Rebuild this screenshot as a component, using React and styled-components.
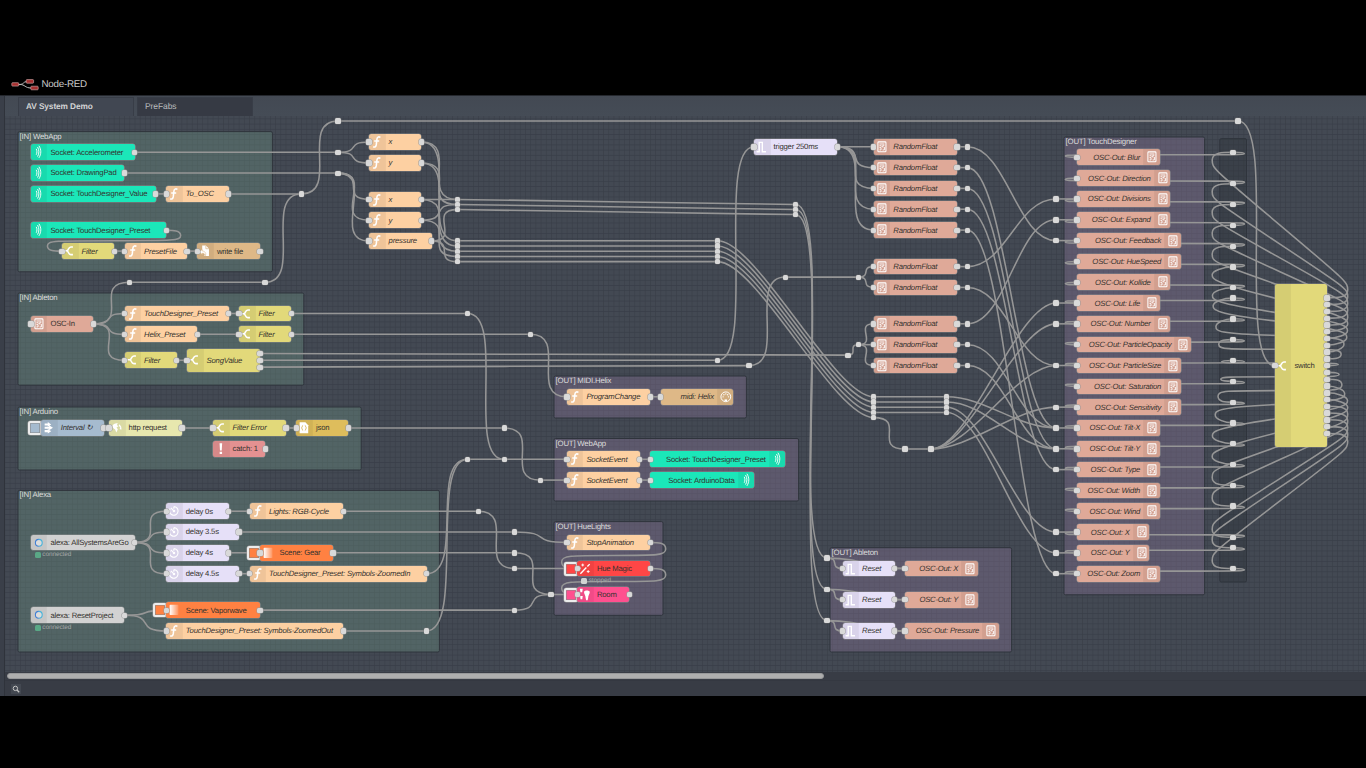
import React from 'react';
import styled, { createGlobalStyle, css } from 'styled-components';

const GlobalStyle = createGlobalStyle`
  * { box-sizing: border-box; }
  html, body { margin: 0; padding: 0; background: #000; }
  body { font-family: 'Liberation Sans', Arial, sans-serif; overflow: hidden; text-rendering: geometricPrecision; }
`;

/* Canvas geometry: one editor unit is 0.5206px at this zoom level. */
const UNIT = 0.5206;
const NODE_W = 100 * UNIT;
const NODE_H = 30 * UNIT;
const OX = 5;
const OY = 116;

const Page = styled.div`
  display: flex;
  flex-direction: column;
  width: 1366px;
  height: 768px;
  background: #000;
`;

const Header = styled.header`
  display: flex;
  align-items: center;
  gap: 2.5px;
  height: 95px;
  padding: 73px 0 0 11px;
  font-size: 9.8px;
  letter-spacing: -0.25px;
  color: #c9c9c9;
  flex: none;
`;

const Editor = styled.main`
  display: flex;
  height: 601px;
  border-top: 1px solid #24272d;
  background: #343841;
  flex: none;
`;

const Gutter = styled.div`
  width: 5px;
  border-right: 1px solid #2f333b;
  background: #3a3f49;
`;

const Workspace = styled.section`
  flex: 1;
  display: flex;
  flex-direction: column;
  min-width: 0;
`;

const TabBar = styled.nav`
  display: flex;
  gap: 3px;
  height: 20px;
  padding: 1px 0 0 13px;
  background: linear-gradient(#434953, #454c56);
  flex: none;
`;

const Tab = styled.div`
  width: 116px;
  height: 19px;
  padding: 0 0 2px 7px;
  display: flex;
  align-items: center;
  font-size: ${(p) => (p.$active ? 8.3 : 8.5)}px;
  letter-spacing: -0.1px;
  border: 1px solid #383d47;
  border-bottom: 0;
  color: ${(p) => (p.$active ? '#d2d3d5' : '#b9bbbe')};
  font-weight: ${(p) => (p.$active ? 700 : 400)};
  background: ${(p) => (p.$active ? '#414752' : '#363a44')};
`;

const Canvas = styled.div`
  position: relative;
  height: 556px;
  overflow: hidden;
  flex: none;
  background-color: #434953;
`;

const Wires = styled.svg`
  position: absolute;
  inset: 0;
  width: 1361px;
  height: 556px;
  path.wire { fill: none; stroke: #969696; stroke-width: 1.55; }
`;

const ScrollTrack = styled.div`
  height: 8px;
  padding: 1px 2px;
  background: #383c45;
  flex: none;
`;

const ScrollThumb = styled.div`
  width: 817px;
  height: 6px;
  border: 1px solid #97989a;
  border-radius: 3px;
  background: #aeaeae;
`;

const Footer = styled.footer`
  display: flex;
  align-items: center;
  flex: 1;
  padding-left: 6px;
  border-top: 1px solid #343841;
  background: #383c45;
`;

const SearchButton = styled.div`
  display: flex;
  align-items: center;
  justify-content: center;
  width: 10px;
  height: 10px;
  background: #434851;
`;

const GroupTitle = styled.div`
  position: absolute;
  left: ${(p) => p.$x - OX + 1.6}px;
  top: ${(p) => p.$y - OY}px;
  font-size: 7.8px;
  letter-spacing: -0.2px;
  line-height: 10px;
  color: #dcdcdc;
  white-space: nowrap;
`;

const NodeBox = styled.div`
  position: absolute;
  left: ${(p) => p.$x - OX}px;
  top: ${(p) => p.$y - OY - p.$h / 2}px;
  width: ${(p) => p.$w}px;
  height: ${(p) => p.$h}px;
  display: flex;
  flex-direction: ${(p) => (p.$right ? 'row-reverse' : 'row')};
  align-items: stretch;
  border-radius: 2.5px;
  background: ${(p) => p.$color};
  box-shadow: 0 0 0 0.6px rgba(153, 153, 153, 0.75);
`;

const IconCell = styled.span`
  display: flex;
  align-items: center;
  justify-content: center;
  flex: none;
  width: ${NODE_H}px;
  ${(p) =>
    p.$shade &&
    css`
      background: rgba(0, 0, 0, 0.055);
      box-shadow: ${p.$right ? '-0.6px' : '0.6px'} 0 0 rgba(0, 0, 0, 0.08);
    `}
  svg { display: block; width: ${NODE_H}px; height: ${NODE_H}px; }
`;

const Label = styled.span`
  display: flex;
  align-items: center;
  padding: 0 4px;
  font-size: 7.7px;
  letter-spacing: -0.2px;
  font-style: ${(p) => (p.$italic ? 'italic' : 'normal')};
  color: #35322f;
  white-space: nowrap;
`;

const Port = styled.i`
  position: absolute;
  left: ${(p) => p.$x - OX - 2.6}px;
  top: ${(p) => p.$y - OY - 2.6}px;
  width: 5.4px;
  height: 5.4px;
  border-radius: 1.5px;
  background: #d9d9d9;
  box-shadow: 0 0 0 0.5px ${(p) => (p.$junction ? 'rgba(120,120,120,.6)' : '#999')};
`;

const NodeButton = styled.span`
  position: absolute;
  left: ${(p) => p.$x - OX - 13.2}px;
  top: ${(p) => p.$y - OY - 7}px;
  width: 14px;
  height: 14px;
  border: 2px solid #ececec;
  border-radius: 2.5px;
  background: ${(p) => p.$color};
  box-shadow: inset 0 0 0 0.6px #888, 0 0 0 0.5px #999;
`;

const Status = styled.div`
  position: absolute;
  left: ${(p) => p.$x - OX}px;
  top: ${(p) => p.$y - OY - 4}px;
  display: flex;
  align-items: center;
  gap: 1.5px;
  height: 8px;
  font-size: 6.4px;
  letter-spacing: -0.05px;
  color: #a4a8a8;
  &::before {
    content: '';
    width: 6px;
    height: 6px;
    border-radius: 1.5px;
    background: ${(p) => p.$dot};
  }
`;

/* ---- icons, drawn on a 30x30 grid ---- */
const stroke = { fill: 'none', stroke: '#fff', strokeWidth: 2.4, strokeLinecap: 'round' };
const ICONS = {
  fn: (
    <path {...stroke} strokeWidth="3" strokeLinecap="butt" d="M22 6.4 C18.4 4.4 15.6 6 15.2 10 L14 20.5 C13.4 24.6 11.2 26 8 24.4 M10 13.4 H19.6" />
  ),
  sw: (
    <g {...stroke} strokeWidth="3" strokeLinecap="butt">
      <path d="M4.5 15 H9 C13 15 11.5 7.6 17 7.6 H21" />
      <path d="M9 15 C13 15 11.5 22.4 17 22.4 H21" />
    </g>
  ),
  wave: (
    <g {...stroke} strokeWidth="1.8">
      <path d="M10.4 10 C11.8 13 11.8 17 10.4 20" />
      <path d="M13 6.5 C16 12 16 18 13 23.5" />
      <path d="M15.6 4 C20 11 20 19 15.6 26" />
    </g>
  ),
  osc: (
    <g fill="none" stroke="#fff" strokeWidth="2">
      <rect x="7.5" y="5.5" width="15.5" height="19" rx="1.5" />
      <path d="M10.5 9.6 H20 M10.5 13 H14 L17 16 V12 H20 M10.5 16.5 H13.5 V21 H10.5 M20 15.5 V21 H16.5" strokeWidth="1.7" />
    </g>
  ),
  file: (
    <g>
      <path fill="#fff" d="M10 5 H17 L23 11 V25 H14 C16 21 14 17 10 18 Z" />
      <path fill="#fff" d="M4 17 L10 12.5 V15.4 C15 15.4 18 18.6 16.6 24.5 C15 20.6 13.4 19.6 10 19.6 V22 Z" stroke="#deb887" strokeWidth="1" />
      <path d="M17 5 V11 H23" fill="none" stroke="#deb887" strokeWidth="1.4" />
    </g>
  ),
  inject: (
    <path fill="#fff" d="M7 6.5 H13 V4 L19.5 8.8 L13 13 V10.6 H7 Z M7 13.2 H15.5 V10.2 L23 15 L15.5 19.8 V16.8 H7 Z M7 19.4 H13 V17 L19.5 21.4 L13 26 V23.5 H7 Z" />
  ),
  globe: (
    <g fill="#fff">
      <path d="M6 12 C8 7 13 5.5 17 6.4 L15 9.6 L18 12 L14.5 14.6 L17 18 L14 24 L11.8 18.4 L8.6 16 Z" />
      <path d="M19.5 8 C23.4 10.6 24.8 15 23.4 19 L20.6 17 L21.6 14 L18.8 11.4 Z" />
    </g>
  ),
  json: (
    <g>
      <path fill="#fff" d="M7 4.5 H18 L23.5 10 V25.5 H7 Z" />
      <path fill="none" stroke="#d9b45c" strokeWidth="1.8" d="M13.6 10.5 C11 10.5 13.2 14.4 10.4 15.2 C13.2 16 11 20 13.6 20 M17 10.5 C19.6 10.5 17.4 14.4 20.2 15.2 C17.4 16 19.6 20 17 20" />
    </g>
  ),
  bang: <path fill="#fff" d="M12.6 4.5 H17.6 L16.8 18.4 H13.4 Z M12.8 20.6 H17.4 V25.2 H12.8 Z" />,
  alexa: (
    <g>
      <circle cx="15" cy="15" r="6" fill="#dcdcdc" />
      <path fill="none" strokeWidth="2" stroke="#3f7fd6" d="M15 21.6 A6.6 6.6 0 0 1 15 8.4" />
      <path fill="none" strokeWidth="2" stroke="#45b4dc" d="M15 8.4 A6.6 6.6 0 0 1 15 21.6" />
    </g>
  ),
  clock: (
    <g fill="none" stroke="#fff" strokeWidth="2.1">
      <path d="M15 7 A8.2 8.2 0 1 1 8 10.8 M15 7 V11 M9.5 9.5 L16 16" />
      <circle cx="15.4" cy="15.4" r="1.4" fill="#fff" />
    </g>
  ),
  pulse: <path {...stroke} strokeLinecap="butt" strokeWidth="2.6" d="M5 24.5 H10 V6.5 H16 V24.5 H23" />,
  scene: <rect x="7" y="5.5" width="17" height="19.5" rx="1.5" fill="url(#sceneFade)" />,
  wand: (
    <g fill="none" stroke="#fff" strokeWidth="2.6">
      <path d="M6.5 24.5 L18 12.6 M20 10.6 L24.4 6" />
      <path strokeWidth="1.8" d="M11 5 V10.4 M8.3 7.7 H13.7 M21.5 17.5 V23 M18.8 20.3 H24.2 M5.5 12 V16 M3.6 14 H7.4" />
    </g>
  ),
  bulbs: (
    <g fill="#fff">
      <path d="M5.5 3.5 H11 L10 10 H6.6 Z" />
      <path d="M13.5 9.5 C13.5 5.6 24.5 5.6 24.5 9.5 C24.5 13.6 21.4 15.5 21.4 21 L20.4 25.5 H17.6 L16.6 21 C16.6 15.5 13.5 13.6 13.5 9.5 Z" />
      <path d="M6 17.5 H11 L10.2 23.4 H6.8 Z" />
    </g>
  ),
  midi: (
    <g fill="none" stroke="#fff" strokeWidth="1.8">
      <circle cx="15" cy="15" r="9.4" />
      <g fill="#fff" stroke="none">
        <circle cx="9.8" cy="15" r="1.3" /><circle cx="20.2" cy="15" r="1.3" />
        <circle cx="11.4" cy="11" r="1.3" /><circle cx="18.6" cy="11" r="1.3" />
        <circle cx="15" cy="9.5" r="1.3" /><rect x="12.6" y="20" width="4.8" height="3.4" />
      </g>
    </g>
  ),
};

const C = {
  socket: '#1be7b9', fn: '#fdd0a2', sw: '#e2d97a', file: '#deb887', osc: '#dfa998',
  inject: '#a6bbcf', http: '#e7e7ae', json: '#debd5c', err: '#e49191', alexa: '#d2d2d2',
  delay: '#e6e0f8', scene: '#ff8142', magic: '#ff4646', room: '#ff508f',
};

/* x, centre y, width, colour, icon, label, options */
const node = (x, y, w, color, icon, label, o = {}) => ({ x, y, w, color, icon, label, inp: true, out: 1, h: NODE_H, ...o });
const it = { italic: true };
const src = { inp: false };
const oscOut = (x, y, w, label) => node(x, y, w, C.osc, 'osc', label, { italic: true, right: true, out: 0 });

/* name, node width, y of the switch-side junction, has a left junction */
const TD_ROWS = [
  ['Blur', 83, 152.3, 0], ['Direction', 93.5, 183.7, 0], ['Divisions', 93.5, 204.5, 1], ['Expand', 93.5, 225.3, 1],
  ['Feedback', 104, 246.2, 1], ['HueSpeed', 104, 267, 0], ['Kollide', 93.5, 287.7, 0], ['Life', 83, 298, 1],
  ['Number', 93.5, 318.8, 1], ['ParticleOpacity', 114.3, 339.6, 0], ['ParticleSize', 104, 360.5, 1],
  ['Saturation', 104, 381.3, 0], ['Sensitivity', 104, 402.1, 1], ['Tilt-X', 83, 422.8, 1], ['Tilt-Y', 83, 443.7, 1],
  ['Type', 83, 464.5, 1], ['Width', 83, 485.3, 0], ['Wind', 83, 506, 0], ['X', 72.5, 537.3, 1], ['Y', 72.5, 547.7, 1],
  ['Zoom', 83, 568.5, 1],
];
const rowY = (i) => 157.3 + i * 20.82;
const RF = [146.8, 167.6, 188.4, 209.2, 230.1, 266.6, 287.4, 323.8, 344.7, 365.5];
const LANES_A = [199.4, 204.5, 209.6];
const LANES_B = [240.8, 246, 251.2, 256.4, 261.6];
const LANES_C = [396.8, 402, 407.2, 412.4, 417.6];
const switchOut = (i) => 297.8 + i * 6.78;

const NODES = [
  node(30.8, 152.2, 103.9, C.socket, 'wave', 'Socket: Accelerometer', src),
  node(30.8, 173, 93.6, C.socket, 'wave', 'Socket: DrawingPad', src),
  node(30.8, 193.9, 124.9, C.socket, 'wave', 'Socket: TouchDesigner_Value', src),
  node(166.2, 193.9, 62.4, C.fn, 'fn', 'To_OSC', it),
  node(30.8, 230.3, 135.3, C.socket, 'wave', 'Socket: TouchDesigner_Preset', src),
  node(62, 251.1, 52.1, C.sw, 'sw', 'Filter', it),
  node(124.5, 251.1, 62.4, C.fn, 'fn', 'PresetFile', it),
  node(197.3, 251.1, 62.5, C.file, 'file', 'write file'),
  node(30.8, 323.9, 62.5, C.osc, 'osc', 'OSC-In'),
  node(124.5, 313.5, 104.1, C.fn, 'fn', 'TouchDesigner_Preset', it),
  node(239, 313.5, 52.1, C.sw, 'sw', 'Filter', it),
  node(124.5, 334.3, 72.9, C.fn, 'fn', 'Helix_Preset', it),
  node(239, 334.3, 52.1, C.sw, 'sw', 'Filter', it),
  node(124.5, 360.3, 52.1, C.sw, 'sw', 'Filter', it),
  node(187, 360.3, 72.9, C.sw, 'sw', 'SongValue', { italic: true, h: 23.2, outs: [353.5, 360.3, 367.1] }),
  node(41.2, 428, 62.5, C.inject, 'inject', 'Interval ↻', { italic: true, inp: false, button: C.inject }),
  node(109, 428, 72.9, C.http, 'globe', 'http request'),
  node(213, 428, 72.9, C.sw, 'sw', 'Filter Error', it),
  node(296.4, 428, 52.1, C.json, 'json', 'json'),
  node(213, 448.8, 52.1, C.err, 'bang', 'catch: 1', src),
  node(30.8, 542.4, 103.9, C.alexa, 'alexa', 'alexa: AllSystemsAreGo', src),
  node(30.8, 615.3, 93.6, C.alexa, 'alexa', 'alexa: ResetProject', src),
  node(166.2, 511.2, 62.4, C.delay, 'clock', 'delay 0s'),
  node(166.2, 532, 72.8, C.delay, 'clock', 'delay 3.5s'),
  node(166.2, 552.8, 62.4, C.delay, 'clock', 'delay 4s'),
  node(166.2, 573.7, 72.8, C.delay, 'clock', 'delay 4.5s'),
  node(249.5, 511.2, 93.7, C.fn, 'fn', 'Lights: RGB-Cycle', it),
  node(259.9, 552.8, 72.9, C.scene, 'scene', 'Scene: Gear', { button: C.scene }),
  node(249.5, 573.7, 177, C.fn, 'fn', 'TouchDesigner_Preset: Symbols-ZoomedIn', it),
  node(166.2, 610.1, 93.7, C.scene, 'scene', 'Scene: Vaporwave', { button: C.scene }),
  node(166.2, 631, 177, C.fn, 'fn', 'TouchDesigner_Preset: Symbols-ZoomedOut', it),
  node(369, 142, 52.1, C.fn, 'fn', 'x', it),
  node(369, 162.9, 52.1, C.fn, 'fn', 'y', it),
  node(369, 199.4, 52.1, C.fn, 'fn', 'x', it),
  node(369, 220.2, 52.1, C.fn, 'fn', 'y', it),
  node(369, 241, 62.5, C.fn, 'fn', 'pressure', it),
  node(566.8, 396.8, 83.3, C.fn, 'fn', 'ProgramChange', it),
  node(660.5, 396.8, 72.9, C.file, 'midi', 'midi: Helix', { italic: true, right: true, out: 0 }),
  node(566.8, 459.3, 72.9, C.fn, 'fn', 'SocketEvent', it),
  node(650.1, 459.3, 135.3, C.socket, 'wave', 'Socket: TouchDesigner_Preset', { right: true, out: 0 }),
  node(566.8, 480.1, 72.9, C.fn, 'fn', 'SocketEvent', it),
  node(650.1, 480.1, 104.1, C.socket, 'wave', 'Socket: ArduinoData', { right: true, out: 0 }),
  node(566.8, 542.4, 83.3, C.fn, 'fn', 'StopAnimation', it),
  node(577.3, 568.5, 72.8, C.magic, 'wand', 'Hue Magic', { button: C.magic }),
  node(577.3, 594.5, 52, C.room, 'bulbs', 'Room', { button: C.room }),
  node(754, 146.8, 83.3, C.delay, 'pulse', 'trigger 250ms'),
  ...RF.map((y) => node(873.7, y, 83.3, C.osc, 'osc', 'RandomFloat', it)),
  node(842.5, 568.5, 52.1, C.delay, 'pulse', 'Reset', it),
  node(842.5, 599.7, 52.1, C.delay, 'pulse', 'Reset', it),
  node(842.5, 631, 52.1, C.delay, 'pulse', 'Reset', it),
  oscOut(905, 568.5, 72.9, 'OSC-Out: X'),
  oscOut(905, 599.7, 72.9, 'OSC-Out: Y'),
  oscOut(905, 631, 93.7, 'OSC-Out: Pressure'),
  ...TD_ROWS.map(([name, w], i) => oscOut(1076.8, rowY(i), w, `OSC-Out: ${name}`)),
  node(1274.8, 365.6, 52.1, C.sw, 'sw', 'switch', { h: 163.5, outs: TD_ROWS.map((_, i) => switchOut(i)) }),
];

const at = (x, ys) => ys.map((y) => [x, y]);
const JUNCTIONS = [
  [337.8, 121], [1238, 121], [337.8, 152.2], [337.8, 173.1], [301.4, 193.9], [129.6, 282.3], [265, 282.3],
  [467.6, 313.5], [530.2, 334.3], [717.7, 360.3], [749, 365.6], [785.3, 277.1], [858.2, 277.1], [847.8, 355.1],
  [858.2, 344.7], [504.2, 428], [504.2, 459.3], [467.6, 459.3], [540.6, 480.1], [478.1, 511.2], [514.6, 532],
  [514.6, 552.8], [514.6, 568.5], [551, 594.5], [514.6, 610.1], [426.3, 631],
  ...at(457.3, LANES_A), ...at(457.3, LANES_B), ...at(795.7, LANES_A.map((y) => y + 5)), ...at(717.7, LANES_B),
  ...at(873.7, LANES_C), ...at(946.6, LANES_C.slice(0, 4)), [905, 449], [931, 449],
  ...at(967.4, RF), ...at(827, [558, 589.3, 620.5]),
  ...TD_ROWS.flatMap((r, i) => (r[3] ? [[1056, rowY(i)]] : [])),
  ...TD_ROWS.map((r) => [1233, r[2]]),
];

const WIRES = [
  [134.7, 152.2, 337.8, 152.2], [124.4, 173, 337.8, 173], [155.7, 193.9, 166.2, 193.9], [228.6, 193.9, 301.4, 193.9],
  [301.4, 193.9, 337.8, 121], [265, 282.3, 301.4, 193.9], [129.6, 282.3, 265, 282.3], [337.8, 121, 1238, 121],
  [1238, 121, 1274.8, 365.6], [166.1, 230.3, 62, 251.1], [114, 251.1, 124.5, 251.1], [187, 251.1, 197, 251.1],
  [93.3, 323.9, 129.6, 282.3], [93.3, 323.9, 124.5, 313.5], [93.3, 323.9, 124.5, 334.3], [93.3, 323.9, 124.5, 360.3],
  [228.6, 313.5, 239, 313.5], [197.4, 334.3, 239, 334.3], [176.6, 360.3, 187, 360.3],
  [291.1, 313.5, 467.6, 313.5], [467.6, 313.5, 504.2, 459.3], [291.1, 334.3, 530.2, 334.3], [530.2, 334.3, 566.8, 396.8],
  [260, 353.5, 847.8, 355.1], [260, 360.3, 717.7, 360.3], [260, 367.1, 749, 365.6], [717.7, 360.3, 754, 146.8],
  [749, 365.6, 785.3, 277.1], [785.3, 277.1, 858.2, 277.1], [858.2, 277.1, 873.7, 266.6], [858.2, 277.1, 873.7, 287.4],
  [847.8, 355.1, 858.2, 344.7], ...RF.slice(7).map((y) => [858.2, 344.7, 873.7, y]),
  ...RF.slice(0, 5).map((y) => [837.3, 146.8, 873.7, y]), ...RF.map((y) => [957, y, 967.4, y]),
  [103.7, 428, 109, 428], [182, 428, 213, 428], [286, 428, 296.4, 428], [348.5, 428, 504.2, 428],
  [504.2, 428, 540.6, 480.1], [540.6, 480.1, 566.8, 480.1], [467.6, 459.3, 504.2, 459.3], [504.2, 459.3, 566.8, 459.3],
  [639.7, 459.3, 650, 459.3], [639.7, 480.1, 650, 480.1], [650, 396.8, 660.5, 396.8],
  ...[511.2, 532, 552.8, 573.7].map((y) => [134.7, 542.4, 166.2, y]),
  [124.4, 615.3, 166.2, 610.1], [124.4, 615.3, 166.2, 631],
  [228.6, 511.2, 249.5, 511.2], [343.2, 511.2, 478.1, 511.2], [478.1, 511.2, 514.6, 568.5], [514.6, 568.5, 577.3, 568.5],
  [239, 532, 514.6, 532], [514.6, 532, 566.8, 542.4], [228.6, 552.8, 259.9, 552.8], [332.8, 552.8, 514.6, 552.8],
  [514.6, 552.8, 551, 594.5], [239, 573.7, 249.5, 573.7], [426.5, 573.7, 467.6, 459.3], [343.2, 631, 426.3, 631],
  [426.3, 631, 467.6, 459.3], [260, 610.1, 514.6, 610.1], [514.6, 610.1, 551, 594.5], [551, 594.5, 577.3, 594.5],
  [650.1, 542.4, 577.3, 568.5], [650.1, 568.5, 577.3, 594.5],
  [337.8, 152.2, 369, 142], [337.8, 152.2, 369, 162.9], ...[199.4, 220.2, 241].map((y) => [337.8, 173.1, 369, y]),
  [421.1, 142, 457.3, LANES_A[0]], [421.1, 142, 457.3, LANES_B[0]], [421.1, 162.9, 457.3, LANES_A[1]],
  [421.1, 162.9, 457.3, LANES_B[1]], [421.1, 199.4, 457.3, LANES_A[0]], [421.1, 199.4, 457.3, LANES_B[2]],
  [421.1, 220.2, 457.3, LANES_A[1]], [421.1, 220.2, 457.3, LANES_B[3]], [431.5, 241, 457.3, LANES_A[2]],
  [431.5, 241, 457.3, LANES_B[4]],
  ...LANES_A.map((y) => [457.3, y, 795.7, y + 5]), ...LANES_A.map((y, i) => [795.7, y + 5, 827, 558 + i * 31.25]),
  ...LANES_B.map((y) => [457.3, y, 717.7, y]), ...LANES_B.map((y, i) => [717.7, y, 873.7, LANES_C[i]]),
  ...LANES_C.slice(0, 4).map((y) => [873.7, y, 946.6, y]), [873.7, 417.6, 905, 449], [905, 449, 931, 449],
  ...[568.5, 599.7, 631].flatMap((y) => [[827, y - 10.4, 842.5, y], [827, y - 10.4, 905, y], [894.6, y, 905, y]]),
  [946.6, 396.8, 1056, rowY(13)], [946.6, 402, 1056, rowY(14)], [946.6, 407.2, 1056, rowY(18)], [946.6, 412.4, 1056, rowY(19)],
  ...[7, 8, 10, 12].map((i) => [931, 449, 1056, rowY(i)]),
  ...[4, 13, 14, 15, 20, 2, 10, 3, 13, 14].map((t, i) => [967.4, RF[i], 1056, rowY(t)]),
  ...TD_ROWS.flatMap((r, i) => [
    [1326.9, switchOut(i), 1233, r[2]],
    [1233, r[2], 1076.8, rowY(i)],
    ...(r[3] ? [[1056, rowY(i), 1076.8, rowY(i)]] : []),
  ]),
];

/* Cubic wire going forwards, or a looped one when the target lies to the left. */
function wirePath([ax, ay, bx, by]) {
  const dx = bx - ax;
  const dy = by - ay;
  const len = Math.hypot(dx, dy);
  if (dx > 0) {
    const k = (len < NODE_W ? 0.75 - 0.75 * ((NODE_W - len) / NODE_W) : 0.75) * NODE_W;
    return `M${ax} ${ay}C${ax + k} ${ay} ${bx - k} ${by} ${bx} ${by}`;
  }
  const k = (0.4 - 0.2 * Math.max(0, (NODE_W - Math.min(Math.abs(dx), Math.abs(dy))) / NODE_W)) * NODE_W;
  const cp = NODE_H / 2;
  const down = dy > 0;
  const midX = bx - dx / 2;
  const midY = by - dy / 2;
  const y1 = (by + midY) / 2;
  const topX = ax + k;
  const topY = down ? Math.min(y1 - dy / 2, ay + cp) : Math.max(y1 - dy / 2, ay - cp);
  const botX = bx - k;
  const botY = down ? Math.max(y1, by - cp) : Math.min(y1, by + cp);
  const x1 = (ax + topX) / 2;
  const s = down ? 1 : -1;
  const c = [
    [x1, ay],
    [topX, down ? Math.max(ay, topY - cp) : Math.min(ay, topY + cp)],
    [x1, down ? Math.min(midY, topY + cp) : Math.max(midY, topY - cp)],
    [botX, down ? Math.max(midY, botY - cp) : Math.min(midY, botY + cp)],
    [(bx + botX) / 2, by],
  ];
  if (c[2][1] === topY + s * cp) {
    if (Math.abs(dy) < cp * 10) {
      c[1][1] = topY - (s * cp) / 2;
      c[3][1] = botY - (s * cp) / 2;
    }
    c[2][0] = topX;
  }
  return `M${ax} ${ay}C${c[0]} ${c[1]} ${topX} ${topY}S${c[2]} ${midX} ${midY}S${c[3]} ${botX} ${botY}S${c[4]} ${bx} ${by}`;
}

const GREEN = '#6f9585';
const PURPLE = '#8c769c';
/* x, y, right, bottom, fill, title */
const GROUPS = [
  [18, 131.6, 272.4, 271.8, GREEN, '[IN] WebApp'],
  [18, 293, 303.8, 385.2, GREEN, '[IN] Ableton'],
  [18, 407, 361.2, 470, GREEN, '[IN] Arduino'],
  [18, 490.4, 439.4, 652, GREEN, '[IN] Alexa'],
  [554, 376, 746.4, 418, PURPLE, '[OUT] MIDI.Helix'],
  [554, 438.5, 798.6, 501, PURPLE, '[OUT] WebApp'],
  [554, 521.6, 663, 615.3, PURPLE, '[OUT] HueLights'],
  [830, 547.7, 1011.6, 652, PURPLE, '[OUT] Ableton'],
  [1064, 137, 1204.6, 594.8, PURPLE, '[OUT] TouchDesigner'],
  [1219.8, 138.6, 1246.5, 582, '#2d3137', ''],
];

function FlowNode({ n }) {
  const outs = n.outs || (n.out ? [n.y] : []);
  return (
    <>
      {n.button && <NodeButton $x={n.x} $y={n.y} $color={n.button} />}
      <NodeBox $x={n.x} $y={n.y} $w={n.w} $h={n.h} $color={n.color} $right={n.right}>
        <IconCell $shade={n.icon !== 'scene'} $right={n.right}>
          <svg viewBox="0 0 30 30">{ICONS[n.icon]}</svg>
        </IconCell>
        <Label $italic={n.italic}>{n.label}</Label>
      </NodeBox>
      {n.inp && <Port $x={n.x} $y={n.y} />}
      {outs.map((y) => <Port key={y} $x={n.x + n.w} $y={y} />)}
    </>
  );
}

function Logo() {
  return (
    <svg width="28" height="13" viewBox="0 0 28 13">
      <path d="M7 6.5 H9 C13 6.5 12 3.5 16 3.5 M9 6.5 C14 6.5 14 10 20 10" fill="none" stroke="#b9b9b9" strokeWidth="1" />
      <g fill="#a52f2f" stroke="#d8b3b3" strokeWidth=".6">
        <rect x=".8" y="4.7" width="7" height="3.4" rx=".8" />
        <rect x="15.2" y="1.6" width="7.4" height="3.6" rx=".8" />
        <rect x="19.8" y="8.2" width="7.4" height="3.6" rx=".8" />
      </g>
    </svg>
  );
}

export default function App() {
  return (
    <Page>
      <GlobalStyle />
      <Header>
        <Logo />
        <span>Node-RED</span>
      </Header>
      <Editor>
        <Gutter />
        <Workspace>
          <TabBar>
            <Tab $active>AV System Demo</Tab>
            <Tab>PreFabs</Tab>
          </TabBar>
          <Canvas>
            <Wires viewBox={`${OX} ${OY} 1361 556`}>
              <defs>
                <pattern id="grid" x="4.4" y="3.9" width="5.206" height="5.206" patternUnits="userSpaceOnUse">
                  <path d="M0 0 H5.206 M0 0 V5.206" stroke="#383d47" strokeWidth="1.1" fill="none" />
                </pattern>
                <linearGradient id="sceneFade">
                  <stop offset="0" stopColor="#fff" />
                  <stop offset="1" stopColor="#fff" stopOpacity=".15" />
                </linearGradient>
              </defs>
              <rect x={OX} y={OY} width="1361" height="556" fill="url(#grid)" />
              {GROUPS.map(([x, y, r, b, fill]) => (
                <rect key={`${x}-${y}`} x={x} y={y} width={r - x} height={b - y} rx="1.5" fill={fill} fillOpacity=".36" stroke="#2f343c" strokeWidth="1" />
              ))}
              {WIRES.map((w, i) => <path key={i} className="wire" d={wirePath(w)} />)}
            </Wires>
            {GROUPS.map(([x, y, , , , title]) => title && <GroupTitle key={title} $x={x} $y={y}>{title}</GroupTitle>)}
            {NODES.map((n, i) => <FlowNode key={i} n={n} />)}
            {JUNCTIONS.map(([x, y], i) => <Port key={i} $junction $x={x} $y={y} />)}
            <Status $x={34.8} $y={554.6} $dot="#5aa886">connected</Status>
            <Status $x={34.8} $y={627.5} $dot="#5aa886">connected</Status>
            <Status $x={581.2} $y={580.9} $dot="#d3d3d3">stopped</Status>
          </Canvas>
          <ScrollTrack><ScrollThumb /></ScrollTrack>
          <Footer>
            <SearchButton>
              <svg width="8" height="8" viewBox="0 0 8 8" fill="none" stroke="#c4c4c4">
                <circle cx="3.4" cy="3.4" r="2.2" />
                <path d="M5 5 L7.2 7.2" strokeWidth="1.3" />
              </svg>
            </SearchButton>
          </Footer>
        </Workspace>
      </Editor>
    </Page>
  );
}
